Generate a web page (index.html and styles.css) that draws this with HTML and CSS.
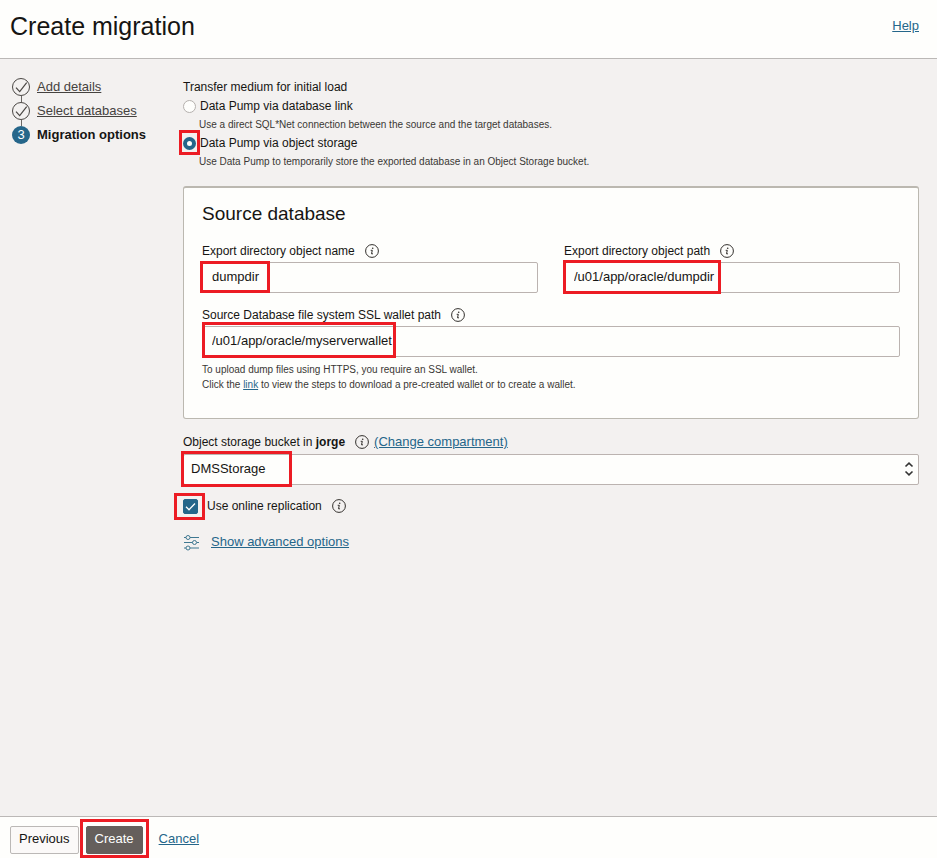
FILE: index.html
```html
<!DOCTYPE html>
<html lang="en">
<head>
<meta charset="utf-8">
<title>Create migration</title>
<link rel="stylesheet" href="styles.css">
</head>
<body>
<svg class="defs" aria-hidden="true">
  <symbol id="info" viewBox="0 0 14 14">
    <circle cx="7" cy="7" r="6.4" fill="none" stroke="currentColor"/>
    <circle cx="7.7" cy="4.2" r=".8" fill="currentColor"/>
    <path d="M5.7 6.3h1.600l-.8 3.500h1.500" fill="none" stroke="currentColor"/>
  </symbol>
  <symbol id="done" viewBox="0 0 18 18">
    <circle cx="9" cy="9" r="8.5" fill="none" stroke="currentColor"/>
    <path d="M4 9.600l3.700 4 7-9" fill="none" stroke="currentColor" stroke-width="1.2"/>
  </symbol>
</svg>
<header class="header">
  <h1 class="title">Create migration</h1>
  <a class="link" href="#help">Help</a>
</header>
<div class="body">
  <nav aria-label="Steps">
    <ol class="steps">
      <li class="step"><svg class="step-icon"><use href="#done"/></svg><a class="step-link" href="#details">Add details</a></li>
      <li class="step"><svg class="step-icon"><use href="#done"/></svg><a class="step-link" href="#databases">Select databases</a></li>
      <li class="step current" aria-current="step"><span class="step-number">3</span>Migration options</li>
    </ol>
  </nav>
  <main class="main">
    <fieldset class="group">
      <legend class="legend">Transfer medium for initial load</legend>
      <div class="option">
        <input class="radio" type="radio" name="medium" id="dblink">
        <label class="option-label" for="dblink">Data Pump via database link</label>
      </div>
      <p class="hint option-hint">Use a direct SQL*Net connection between the source and the target databases.</p>
      <div class="option">
        <span class="anchor"><input class="radio" type="radio" name="medium" id="storage" checked><span class="mark mark-radio"></span></span>
        <label class="option-label" for="storage">Data Pump via object storage</label>
      </div>
      <p class="hint option-hint">Use Data Pump to temporarily store the exported database in an Object Storage bucket.</p>
    </fieldset>
    <section class="panel">
      <h2 class="panel-title">Source database</h2>
      <div class="fields">
        <div class="field">
          <div class="label-row"><label for="name">Export directory object name</label><svg class="info"><use href="#info"/></svg></div>
          <div class="anchor"><input class="input" id="name" type="text" value="dumpdir"><span class="mark mark-name"></span></div>
        </div>
        <div class="field">
          <div class="label-row"><label for="path">Export directory object path</label><svg class="info"><use href="#info"/></svg></div>
          <div class="anchor"><input class="input" id="path" type="text" value="/u01/app/oracle/dumpdir"><span class="mark mark-path"></span></div>
        </div>
        <div class="field wide">
          <div class="label-row"><label for="wallet">Source Database file system SSL wallet path</label><svg class="info"><use href="#info"/></svg></div>
          <div class="anchor"><input class="input" id="wallet" type="text" value="/u01/app/oracle/myserverwallet"><span class="mark mark-wallet"></span></div>
          <p class="hint wallet-hint">To upload dump files using HTTPS, you require an SSL wallet.<br>Click the <a class="hint-link" href="#wallet-steps">link</a> to view the steps to download a pre-created wallet or to create a wallet.</p>
        </div>
      </div>
    </section>
    <div class="bucket">
      <div class="label-row"><label for="bucket">Object storage bucket in <b>jorge</b></label><svg class="info"><use href="#info"/></svg><a class="link change" href="#compartment">(Change compartment)</a></div>
      <div class="anchor">
        <select class="select" id="bucket"><option>DMSStorage</option></select>
        <svg class="arrows" viewBox="0 0 10 16"><path d="M1.5 5.5L5 2.2l3.5 3.3M1.5 10.5L5 13.8l3.5-3.3" fill="none" stroke="#333" stroke-width="1.6"/></svg>
        <span class="mark mark-bucket"></span>
      </div>
    </div>
    <div class="replication">
      <span class="anchor">
        <input class="check" type="checkbox" id="online" checked>
        <svg class="tick" viewBox="0 0 15 15"><path d="M3 7.7l3 3 6-6.2" fill="none" stroke="#fff" stroke-width="1.3"/></svg>
        <span class="mark mark-check"></span>
      </span>
      <label class="check-label" for="online">Use online replication</label><svg class="info"><use href="#info"/></svg>
    </div>
    <div class="advanced">
      <svg class="sliders" viewBox="0 0 17 17"><g fill="none" stroke="#3f7891"><path d="M1 3.5h2M7 3.5h9M1 8.5h8.500M14 8.500h2M1 14h2M7 14h9"/><circle cx="5" cy="3.500" r="2"/><circle cx="11.500" cy="8.500" r="2"/><circle cx="5" cy="14" r="2"/></g></svg>
      <a class="link" href="#advanced">Show advanced options</a>
    </div>
  </main>
</div>
<footer class="footer">
  <button class="button" type="button">Previous</button>
  <span class="anchor"><button class="button primary" type="submit">Create</button><span class="mark mark-create"></span></span>
  <a class="link cancel" href="#cancel">Cancel</a>
</footer>
</body>
</html>
```
FILE: styles.css
```css
* { box-sizing: border-box; }
body {
  margin: 0;
  min-height: 100vh;
  display: flex;
  flex-direction: column;
  background: #f3f1f0;
  color: #161513;
  font: 12px/18px "Liberation Sans", Arial, sans-serif;
}
h1, h2, p, ol { margin: 0; padding: 0; font-weight: normal; }
.defs { position: absolute; width: 0; height: 0; }
.link { color: #25668a; font-size: 13px; }
.anchor { position: relative; display: flex; }

.header {
  display: flex;
  justify-content: space-between;
  align-items: center;
  padding: 8px 18px 14px 10px;
  background: #fefefc;
  border-bottom: 1px solid #bbb8b6;
}
.title { font-size: 25px; line-height: 36px; }

.body { flex: 1; display: flex; padding: 18px 18px 0 12px; }
.steps { width: 171px; padding-top: 1px; list-style: none; font-size: 13px; }
.step { position: relative; display: flex; align-items: center; gap: 7px; margin-bottom: 6px; }
.step:not(.current)::after {
  content: "";
  position: absolute;
  left: 9px;
  top: 18px;
  width: 1px;
  height: 6px;
  background: #6b6865;
}
.step-icon { width: 18px; height: 18px; color: #4a4744; }
.step-link { color: #45423f; }
.step-number {
  width: 18px;
  height: 18px;
  border-radius: 50%;
  background: #25668a;
  color: #fff;
  text-align: center;
  font-weight: normal;
}
.current { font-weight: bold; }

.main { flex: 1; min-width: 0; }
.group { margin: 0; padding: 0; border: 0; }
.legend { padding: 0; line-height: 20px; }
.option { display: flex; align-items: center; gap: 4px; height: 19px; }
.option-label { line-height: 19px; }
.radio {
  appearance: none;
  width: 13px;
  height: 13px;
  margin: 0;
  border: 1px solid #b5b1ae;
  border-radius: 50%;
  background: #fefefc;
}
.radio:checked { border: 4px solid #25668a; }
.hint { font-size: 10px; line-height: 15px; color: #3a3835; }
.option-hint { padding: 1px 0 2px 16px; }

.panel {
  margin-top: 15px;
  padding: 14px 18px 26px;
  border: 1px solid #bbb8b0;
  border-top-width: 2px;
  border-radius: 3px;
  background: #fefefc;
}
.panel-title { margin-bottom: 16px; font-size: 19px; line-height: 24px; }
.fields { display: grid; grid-template-columns: 1fr 1fr; gap: 13px 26px; }
.wide { grid-column: 1 / -1; }
.label-row { display: flex; align-items: center; margin-bottom: 2px; }
.info { width: 14px; height: 14px; margin-left: 10px; color: #33302d; }
.input, .select {
  width: 100%;
  height: 31px;
  margin: 0;
  padding: 0 9px 2px;
  border: 1px solid #bbb3b0;
  border-radius: 2px;
  background: #fefefc;
  color: #161513;
  font: inherit;
  font-size: 13px;
}
.wallet-hint { margin-top: 5px; }
.hint-link { color: #25668a; }

.bucket { margin-top: 14px; }
.bucket .label-row { margin-bottom: 3px; }
.change { margin-left: 5px; }
.select { appearance: none; padding: 0 7px 2px; }
.arrows { position: absolute; right: 5px; top: 7px; width: 10px; height: 16px; pointer-events: none; }

.replication { display: flex; align-items: center; margin-top: 12px; }
.check {
  appearance: none;
  width: 15px;
  height: 15px;
  margin: 0;
  border: 1px solid #25668a;
  border-radius: 2px;
  background: #fefefc;
}
.check:checked { background: #25668a; }
.tick { position: absolute; inset: 0; width: 15px; height: 15px; pointer-events: none; }
.check-label { margin-left: 9px; }
.advanced { display: flex; align-items: center; gap: 11px; margin-top: 18px; }
.sliders { width: 17px; height: 17px; }

.footer {
  display: flex;
  align-items: center;
  padding: 9px 10px 4px;
  background: #fefefc;
  border-top: 1px solid #bbb8b6;
}
.button {
  height: 28px;
  padding: 0 8px 3px;
  border: 1px solid #bbb8b6;
  border-radius: 2px;
  background: #fbf9f8;
  color: #161513;
  font: inherit;
  font-size: 13px;
}
.footer .anchor { margin-left: 7px; }
.primary { border-color: #655f5c; background: #655f5c; color: #fff; }
.cancel { margin-left: 16px; padding-bottom: 3px; }

/* Red frames that call out the values to enter */
.mark { position: absolute; border: 3px solid #ec1c24; pointer-events: none; }
.mark-radio { inset: -7px -4px -5px -4px; }
.mark-name { left: -2px; top: -1px; width: 70px; height: 32px; }
.mark-path { left: -1px; top: -2px; width: 158px; height: 34px; }
.mark-wallet { left: 0; top: -4px; width: 194px; height: 36px; }
.mark-bucket { left: -2px; top: -3px; width: 111px; height: 36px; }
.mark-check { inset: -6px -7px -6px -9px; }
.mark-create { inset: -7px -6px -4px; }
```
